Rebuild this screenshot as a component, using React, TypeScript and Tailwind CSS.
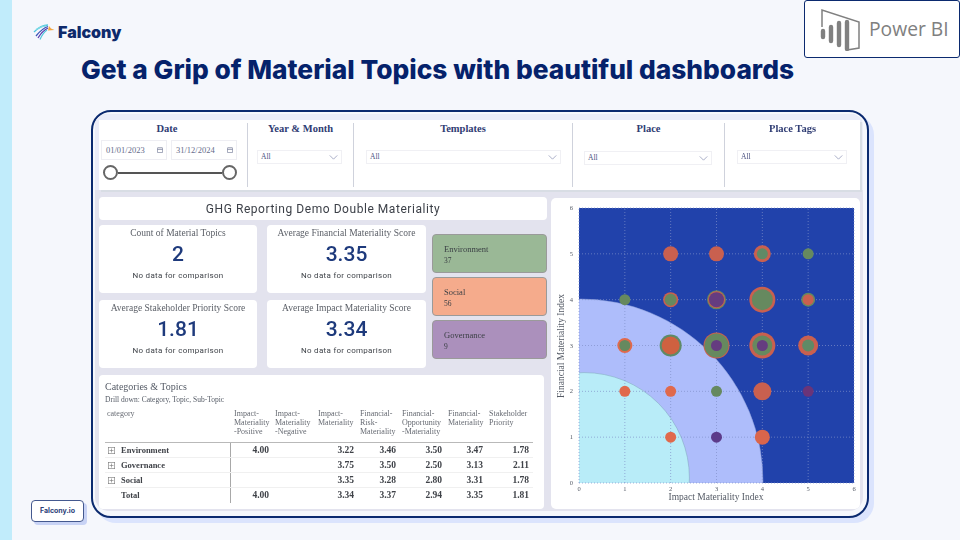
const serif = "font-['Liberation_Serif',serif]"

const filters = [
  { title: 'Year & Month', w: 'w-[106px]', box: 'ml-[9px] w-[85px] mt-[15px]', sep: true },
  { title: 'Templates', w: 'w-[219px]', box: 'ml-[12px] w-[195px] mt-[15px]', sep: true },
  { title: 'Place', w: 'w-[152px]', box: 'ml-[11px] w-[128px] mt-[16px]', sep: true },
  { title: 'Place Tags', w: 'w-[135px]', box: 'ml-[12px] w-[110px] mt-[15px]', sep: false },
]

const kpis = [
  { label: 'Count of Material Topics', value: '2' },
  { label: 'Average Financial Materiality Score', value: '3.35' },
  { label: 'Average Stakeholder Priority Score', value: '1.81' },
  { label: 'Average Impact Materiality Score', value: '3.34' },
]

const chips = [
  { name: 'Environment', count: '37', bg: 'bg-[#9ab896]' },
  { name: 'Social', count: '56', bg: 'bg-[#f5ab8c]' },
  { name: 'Governance', count: '9', bg: 'bg-[#ab90bc]' },
]

const headers = [
  ['Impact-', 'Materiality', '-Positive'],
  ['Impact-', 'Materiality', '-Negative'],
  ['Impact-', 'Materiality'],
  ['Financial-', 'Risk-', 'Materiality'],
  ['Financial-', 'Opportunity', '-Materiality'],
  ['Financial-', 'Materiality'],
  ['Stakeholder', 'Priority'],
]

const rows = [
  { name: 'Environment', values: ['4.00', '', '3.22', '3.46', '3.50', '3.47', '1.78'], plus: true },
  { name: 'Governance', values: ['', '', '3.75', '3.50', '2.50', '3.13', '2.11'], plus: true },
  { name: 'Social', values: ['', '', '3.35', '3.28', '2.80', '3.31', '1.78'], plus: true },
  { name: 'Total', values: ['4.00', '', '3.34', '3.37', '2.94', '3.35', '1.81'], plus: false },
]

const tableCols = 'grid-cols-[126px_41px_43px_42px_42px_46px_41px_47px]'

const OR = '#c9604f'
const GR = '#66895f'
const PU = '#653c80'

// [x, y, [radius, colour] from the outside in]
const bubbles: [number, number, [number, string][]][] = [
  [2, 5, [[7.5, OR]]],
  [3, 5, [[7.5, OR]]],
  [4, 5, [[8.5, OR], [5.5, '#5f8a66']]],
  [5, 5, [[5.5, GR]]],
  [1, 4, [[5.5, GR]]],
  [2, 4, [[7.5, OR], [6, GR]]],
  [3, 4, [[9.5, GR], [8.5, OR], [7.5, PU]]],
  [4, 4, [[13, OR], [10.5, GR]]],
  [5, 4, [[7, GR], [5.5, OR]]],
  [1, 3, [[7.5, '#e0694c'], [5.5, GR]]],
  [2, 3, [[11, '#5f8a66'], [9, '#cf6140']]],
  [3, 3, [[13, OR], [12, GR], [5.5, PU]]],
  [4, 3, [[13, OR], [10, GR], [5.5, PU]]],
  [5, 3, [[10, OR], [6, '#5f8a66']]],
  [1, 2, [[5.5, '#e0694c']]],
  [2, 2, [[5.5, '#e0694c']]],
  [3, 2, [[5.5, GR]]],
  [4, 2, [[9, OR]]],
  [5, 2, [[5.5, '#6a3478']]],
  [2, 1, [[5.5, '#e0694c']]],
  [3, 1, [[5.5, '#5c3b8a']]],
  [4, 1, [[7.5, '#d9654c']]],
]

function Logo() {
  return (
    <svg viewBox="0 0 22 16" className="w-[22px] h-[16px]">
      <path d="M1 8 C6 3 10 1 15 1" fill="none" stroke="#4fc6dc" strokeWidth="1.3" />
      <path d="M3 5.5 C7 3 10 2 13 1.8" fill="none" stroke="#7ddbe6" strokeWidth="1.2" />
      <path d="M3 12 C7 7 10 4 15 2.5" fill="none" stroke="#3b55b8" strokeWidth="1.3" />
      <path d="M5 14 C8 9 11 6 15 4" fill="none" stroke="#5a3fb0" strokeWidth="1.3" />
      <path d="M7 15.5 C9 11 11 8 14 6" fill="none" stroke="#4fc6dc" strokeWidth="1.2" />
      <path d="M16 2 L18 4.5 L21.5 6 L15 6.5 Z" fill="#f4a640" />
    </svg>
  )
}

function PowerBiMark() {
  return (
    <svg viewBox="0 0 44 44" className="w-[44px] h-[44px]" fill="none">
      <path d="M3 20 V3 L40 15 V41 L28 43" stroke="#808080" strokeWidth="1.5" />
      {[
        [3, 24, 33],
        [11, 20, 37],
        [19, 16, 41],
        [27, 15, 45],
      ].map(([x, a, b]) => (
        <path key={x} d={`M${x + 1} ${a} V${b - 3}`} stroke="#808080" strokeWidth="4.4" strokeLinecap="round" />
      ))}
    </svg>
  )
}

function Calendar() {
  return (
    <svg viewBox="0 0 8 8" className="w-[6px] h-[6px] shrink-0" fill="none" stroke="#7a809c">
      <rect x="0.5" y="1" width="7" height="6.5" rx="0.5" />
      <path d="M0.5 3.2 H7.5" />
    </svg>
  )
}

function Chevron() {
  return (
    <svg viewBox="0 0 10 6" className="w-[9px] h-[5px] shrink-0" fill="none" stroke="#8d93b5" strokeWidth="0.9">
      <path d="M0.5 0.5 L5 5 L9.5 0.5" />
    </svg>
  )
}

function DateBox({ value }: { value: string }) {
  return (
    <div className="w-[66px] h-[20px] border border-[#eeeef3] flex items-center justify-between pl-[4px] pr-[3px]">
      <span className="text-[8.5px] text-[#666c8c]">{value}</span>
      <Calendar />
    </div>
  )
}

function Knob() {
  return <span className="w-[15px] h-[15px] rounded-full border-2 border-[#666] bg-white shrink-0" />
}

function FilterBar() {
  return (
    <div className={`${serif} h-[70px] bg-white flex py-[3px] shadow-[2px_2px_0_#d8dde4]`}>
      <div className="w-[149px] border-r border-[#cfd2dc] px-[2px]">
        <div className="text-[10.5px] font-bold text-[#2f3c73] text-center leading-[12px] mr-[12px]">Date</div>
        <div className="flex gap-[4px] mt-[5px]">
          <DateBox value="01/01/2023" />
          <DateBox value="31/12/2024" />
        </div>
        <div className="flex items-center ml-[2px] mt-[5px] w-[134px]">
          <Knob />
          <span className="flex-1 h-[2px] bg-[#555]" />
          <Knob />
        </div>
      </div>
      {filters.map((f) => (
        <div key={f.title} className={`${f.w} ${f.sep ? 'border-r border-[#cfd2dc]' : ''}`}>
          <div className="text-[10.5px] font-bold text-[#2f3c73] text-center leading-[12px]">{f.title}</div>
          <div
            className={`${f.box} h-[14px] border border-[#f0f0f4] flex items-center justify-between pl-[3px] pr-[3px]`}
          >
            <span className="text-[7.5px] text-[#4a5080]">All</span>
            <Chevron />
          </div>
        </div>
      ))}
    </div>
  )
}

function Kpi({ label, value }: { label: string; value: string }) {
  return (
    <div className="h-[68px] bg-white rounded-[4px] flex flex-col items-center">
      <div className={`${serif} text-[9.5px] text-[#5c6068] leading-[12px] mt-[2px]`}>{label}</div>
      <div className="font-['Roboto',sans-serif] font-medium text-[21px] text-[#1e3a7c] leading-[24px] mt-[3px]">
        {value}
      </div>
      <div className="font-['Roboto',sans-serif] text-[8px] text-[#3f4349] leading-[10px] mt-[5px] tracking-[0.3px]">
        No data for comparison
      </div>
    </div>
  )
}

function Chips() {
  return (
    <div className={`${serif} w-[115px] flex flex-col gap-[4px] pt-[9px] ml-[6px]`}>
      {chips.map((c) => (
        <div
          key={c.name}
          className={`${c.bg} h-[39px] rounded-[4px] border border-[#9a9a9a] pl-[11px] pt-[2px] flex flex-col justify-center text-[#3a3f44]`}
        >
          <div className="text-[8.5px] leading-[10px]">{c.name}</div>
          <div className="text-[7.5px] leading-[9px] mt-[2px]">{c.count}</div>
        </div>
      ))}
    </div>
  )
}

function PlusBox() {
  return (
    <svg viewBox="0 0 7 7" className="w-[7px] h-[7px] shrink-0" fill="none" stroke="#777" strokeWidth="0.6">
      <rect x="0.3" y="0.3" width="6.4" height="6.4" />
      <path d="M1.5 3.5 H5.5 M3.5 1.5 V5.5" />
    </svg>
  )
}

function TopicsTable() {
  return (
    <div className={`${serif} mt-[7px] h-[134px] w-[445px] bg-white rounded-[4px] px-[6px] pt-[6px]`}>
      <div className="text-[10px] leading-[12px] text-[#555b66]">Categories &amp; Topics</div>
      <div className="text-[7.5px] leading-[9px] text-[#555b66] mt-[2px]">Drill down: Category, Topic, Sub-Topic</div>
      <div className={`grid ${tableCols} w-[428px] h-[35px] mt-[4px] pt-[1px] border-b border-[#b9b9b9] text-[8px] leading-[9px] text-[#666a72]`}>
        <div className="pl-[2px]">category</div>
        {headers.map((h, i) => (
          <div key={i} className="pl-[3px]">
            {h.map((l) => (
              <div key={l}>{l}</div>
            ))}
          </div>
        ))}
      </div>
      {rows.map((r, i) => (
        <div
          key={r.name}
          className={`grid ${tableCols} w-[428px] h-[15px] items-center text-[9.5px] font-bold text-[#3f4248] ${i < 3 ? 'border-b border-[#f0f0f0]' : ''}`}
        >
          <div className="flex items-center gap-[6px] pl-[3px] h-full border-r border-[#a8a8a8] text-[8.5px]">
            {r.plus ? <PlusBox /> : <span className="w-[7px]" />}
            <span>{r.name}</span>
          </div>
          {r.values.map((v, j) => (
            <div key={j} className={`text-right ${j === 6 ? 'pr-[4px]' : 'pr-[3px]'}`}>
              {v}
            </div>
          ))}
        </div>
      ))}
    </div>
  )
}

function Chart() {
  const x0 = 28
  const y0 = 285
  const u = 275 / 6
  const ticks = [0, 1, 2, 3, 4, 5, 6]
  const label = { fontFamily: 'Liberation Serif, serif', fill: '#555b66' }
  return (
    <div className="w-[309px] h-[311px] ml-[4px] mt-[1px] bg-white rounded-[5px]">
      <svg viewBox="0 0 309 311" className="w-[309px] h-[311px] block">
        <defs>
          <clipPath id="plot">
            <rect x={x0} y={y0 - 275} width="275" height="275" />
          </clipPath>
        </defs>
        <rect x={x0} y={y0 - 275} width="275" height="275" fill="#2142ab" />
        <g clipPath="url(#plot)">
          <circle cx={x0 + 2} cy={y0 - 2} r={3.97 * u} fill="#aebdfb" stroke="#8fa0d8" strokeWidth="0.5" />
          <circle cx={x0 + 5} cy={y0 - 5} r={2.3 * u} fill="#b8ecf8" stroke="#7fa3bb" strokeWidth="0.5" />
        </g>
        {ticks.map((t) => (
          <g key={t}>
            <path
              d={`M${x0 + t * u} ${y0} V${y0 - 275} M${x0} ${y0 - t * u} H${x0 + 275}`}
              stroke="#7f8fc8"
              strokeWidth="0.7"
              strokeDasharray="1 2"
            />
            <text x={x0 + t * u} y={y0 + 8} textAnchor="middle" fontSize="6.5" {...label}>
              {t}
            </text>
            <text x={x0 - 6} y={y0 - t * u + 2} textAnchor="end" fontSize="6.5" {...label}>
              {t}
            </text>
          </g>
        ))}
        {bubbles.map(([x, y, layers]) =>
          layers.map(([r, c], i) => (
            <circle key={`${x}-${y}-${i}`} cx={x0 + x * u} cy={y0 - y * u} r={r} fill={c} />
          )),
        )}
        <text x={165} y={302} textAnchor="middle" fontSize="9.5" {...label}>
          Impact Materiality Index
        </text>
        <text transform={`translate(13 ${y0 - 137}) rotate(-90)`} textAnchor="middle" fontSize="9.5" {...label}>
          Financial Materiality Index
        </text>
      </svg>
    </div>
  )
}

function Dashboard() {
  return (
    <div className="ml-[79px] mt-[25px] w-[778px] h-[408px] relative rounded-[20px] border-2 border-[#0b2a6f] bg-[#f5f7fc] shadow-[5px_5px_0_#dbe4fd] p-[2px] pr-[4px]">
      <div className="h-[397px] rounded-t-[12px] rounded-b-[14px] bg-[#e3e3ee] overflow-hidden blur-[0.3px]">
        <div className="bg-[#eaecf8] pt-[6px] pl-[4px]">
          <div className="w-[761px]">
            <FilterBar />
          </div>
        </div>
        <div className="flex pl-[4px] pt-[7px]">
          <div className="w-[448px]">
            <div className="h-[23px] bg-white rounded-[4px] flex items-center justify-center font-['Roboto',sans-serif] text-[12px] tracking-[0.55px] text-[#3c4048]">
              GHG Reporting Demo Double Materiality
            </div>
            <div className="flex mt-[5px]">
              <div className="grid grid-cols-[158px_159px] gap-x-[10px] gap-y-[7px]">
                {kpis.map((k) => (
                  <Kpi key={k.label} {...k} />
                ))}
              </div>
              <Chips />
            </div>
            <TopicsTable />
          </div>
          <Chart />
        </div>
      </div>
    </div>
  )
}

export default function App() {
  return (
    <div className="relative w-[960px] h-[540px] overflow-hidden bg-[#f5f7fc] flex">
      <div className="w-[12px] bg-[#c1ecfb] shrink-0" />
      <div className="flex-1">
        <div className="flex items-center gap-[3px] ml-[21px] mt-[23px] h-[17px]">
          <Logo />
          <span className="font-['Inter',sans-serif] font-black text-[16px] text-[#0e2a6b]">Falcony</span>
        </div>
        <h1 className="ml-[69px] mt-[15px] h-[30px] leading-[30px] font-['Inter',sans-serif] font-extrabold text-[26.3px] text-[#05226b] whitespace-nowrap">
          Get a Grip of Material Topics with beautiful dashboards
        </h1>
        <Dashboard />
      </div>
      <div className="absolute right-0 top-0 w-[156px] h-[58px] bg-white border-[1.5px] border-[#0b2a6f] rounded-[3px] flex items-center pl-[14px] gap-[6px]">
        <PowerBiMark />
        <span className="font-['Open_Sans',sans-serif] text-[19.3px] text-[#808080]">Power BI</span>
      </div>
      <div className="absolute left-[31px] top-[500px] w-[53px] h-[22px] bg-white border-[1.5px] border-[#44598f] rounded-[4px] shadow-[3px_3px_0_#c8d3f5] flex items-center justify-center font-['Inter',sans-serif] font-bold text-[7px] text-[#2c3e78]">
        Falcony.io
      </div>
    </div>
  )
}
